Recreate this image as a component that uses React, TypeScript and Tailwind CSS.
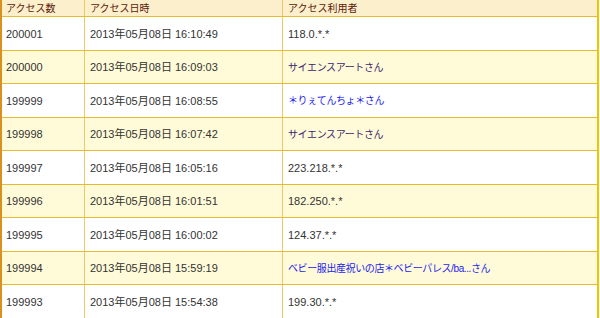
import React from "react";

type Row = { count: string; date: string; user: string; kind: "ip" | "link" | "visited" };

const rows: Row[] = [
  { count: "200001", date: "2013年05月08日 16:10:49", user: "118.0.*.*", kind: "ip" },
  { count: "200000", date: "2013年05月08日 16:09:03", user: "サイエンスアートさん", kind: "visited" },
  { count: "199999", date: "2013年05月08日 16:08:55", user: "＊りぇてんちょ＊さん", kind: "link" },
  { count: "199998", date: "2013年05月08日 16:07:42", user: "サイエンスアートさん", kind: "visited" },
  { count: "199997", date: "2013年05月08日 16:05:16", user: "223.218.*.*", kind: "ip" },
  { count: "199996", date: "2013年05月08日 16:01:51", user: "182.250.*.*", kind: "ip" },
  { count: "199995", date: "2013年05月08日 16:00:02", user: "124.37.*.*", kind: "ip" },
  { count: "199994", date: "2013年05月08日 15:59:19", user: "ベビー服出産祝いの店＊ベビーパレス/ba...さん", kind: "link" },
  { count: "199993", date: "2013年05月08日 15:54:38", user: "199.30.*.*", kind: "ip" },
];

const userClass = {
  ip: "text-[#333333]",
  link: "text-[10px] tracking-[-0.4px] text-[#1c1cf0]",
  visited: "text-[10px] tracking-[-0.4px] text-[#3b1c6e]",
};

const App = () => {
  return (
    <div
      className="w-[600px] h-[318px] overflow-hidden bg-white text-[11px] text-[#333333]"
      style={{ fontFamily: '"Liberation Sans", "Noto Sans CJK JP", sans-serif' }}
    >
      <div className="border-l-2 border-l-[#d9901c] border-r-2 border-r-[#f0c400] mr-[1px]">
        <div className="grid grid-cols-[83px_198px_1fr] h-[17px] bg-[#fbefcc] text-[10px] text-[#5a1a08] border-b border-b-[#e6bb30]">
          <div className="flex items-center pl-[4px] border-r border-r-[#ecc965]">アクセス数</div>
          <div className="flex items-center pl-[5px] border-r border-r-[#ecc965]">アクセス日時</div>
          <div className="flex items-center pl-[5px]">アクセス利用者</div>
        </div>
        {rows.map((r, i) => (
          <div
            key={r.count}
            className={
              i % 2 === 0
                ? "grid grid-cols-[83px_198px_1fr] h-[33.5px] bg-white border-b border-b-[#e6bb30]"
                : "grid grid-cols-[83px_198px_1fr] h-[33.5px] bg-[#fffbd8] border-b border-b-[#e6bb30]"
            }
          >
            <div className="flex items-center pl-[4px] pt-[1px] border-r border-r-[#ecc965]">{r.count}</div>
            <div className="flex items-center pl-[5px] pt-[1px] border-r border-r-[#ecc965]">{r.date}</div>
            <div className={"flex items-center pl-[5px] pt-[1px] " + userClass[r.kind]}>{r.user}</div>
          </div>
        ))}
      </div>
    </div>
  );
};

export default App;
